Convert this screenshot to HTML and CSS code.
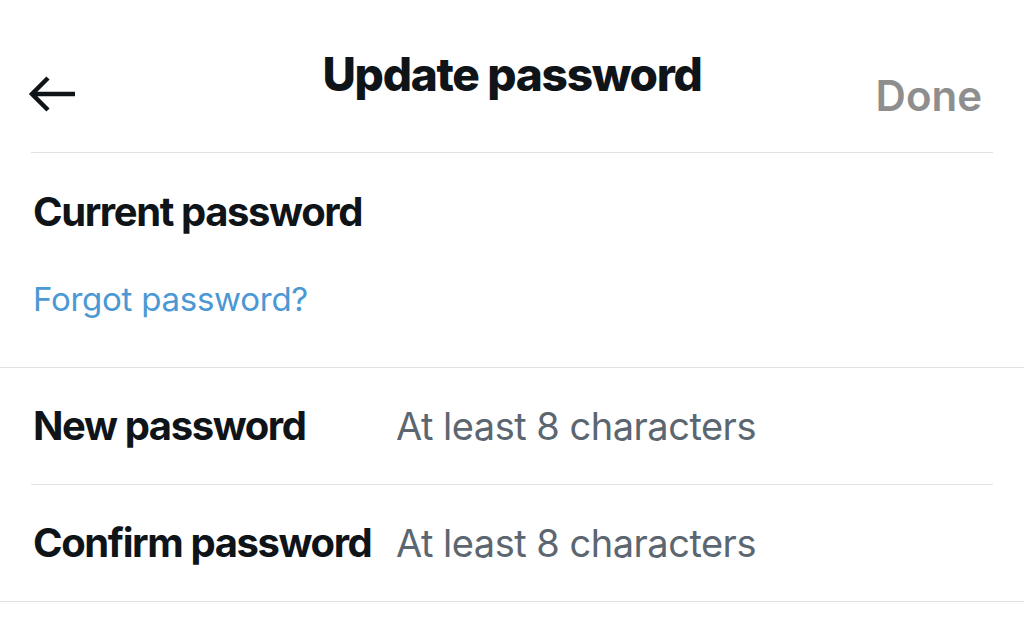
FILE: index.html
```html
<!DOCTYPE html>
<html>
  <head>
    <title>Update password</title>
    <link rel="stylesheet" href="styles.css">
  </head>
  <body>
    <div class="header">
      <button class="back" aria-label="Back">
        <svg width="50" height="40" viewBox="0 0 50 40">
          <path d="M20 4 L4 20 L20 36 M4 20 L47 20" fill="none" stroke="#0f1419" stroke-width="4.5" stroke-linecap="butt" stroke-linejoin="miter"/>
        </svg>
      </button>
      <h1 class="title">Update password</h1>
      <span class="done">Done</span>
    </div>
    <div class="divider inset"></div>

    <div class="current">
      <div class="label">Current password</div>
      <a class="forgot" href="#">Forgot password?</a>
    </div>
    <div class="divider"></div>

    <div class="row">
      <div class="label">New password</div>
      <div class="hint">At least 8 characters</div>
    </div>
    <div class="divider inset"></div>
    <div class="row">
      <div class="label">Confirm password</div>
      <div class="hint">At least 8 characters</div>
    </div>
    <div class="divider"></div>
  </body>
</html>
```

FILE: styles.css
```css
html,
body {
  margin: 0;
  background-color: #fff;
}
body {
  font-family: Inter, "Noto Sans", sans-serif;
  color: #0f1419;
}
.header {
  height: 152px;
  padding: 0 31px;
  display: grid;
  grid-template-columns: 1fr auto 1fr;
  align-items: start;
  box-sizing: border-box;
}
.back {
  margin: 74px 0 0 -3px;
  padding: 0;
  border: none;
  background: none;
  width: 50px;
  height: 40px;
}
.title {
  margin: 51px 0 0;
  font-size: 46px;
  line-height: 1;
  font-weight: 800;
  letter-spacing: -1.3px;
}
.done {
  justify-self: end;
  margin-top: 75px;
  margin-right: 11px;
  font-size: 42px;
  line-height: 1;
  font-weight: 600;
  color: #8e8e8e;
}
.divider {
  height: 1px;
  background-color: #e2e2e2;
}
.divider.inset {
  margin: 0 31px;
}
.current {
  height: 214px;
  padding: 39px 33px 0;
  box-sizing: border-box;
}
.label {
  font-size: 40px;
  line-height: 1;
  font-weight: 700;
  letter-spacing: -1.4px;
}
.forgot {
  display: block;
  margin-top: 51px;
  font-size: 33px;
  line-height: 1;
  letter-spacing: -0.25px;
  color: #4a98d4;
  text-decoration: none;
}
.row {
  height: 116px;
  padding: 0 33px;
  display: grid;
  grid-template-columns: 363px 1fr;
  align-items: center;
}
.hint {
  font-size: 38px;
  line-height: 1;
  letter-spacing: -0.5px;
  color: #5b6670;
}
```
